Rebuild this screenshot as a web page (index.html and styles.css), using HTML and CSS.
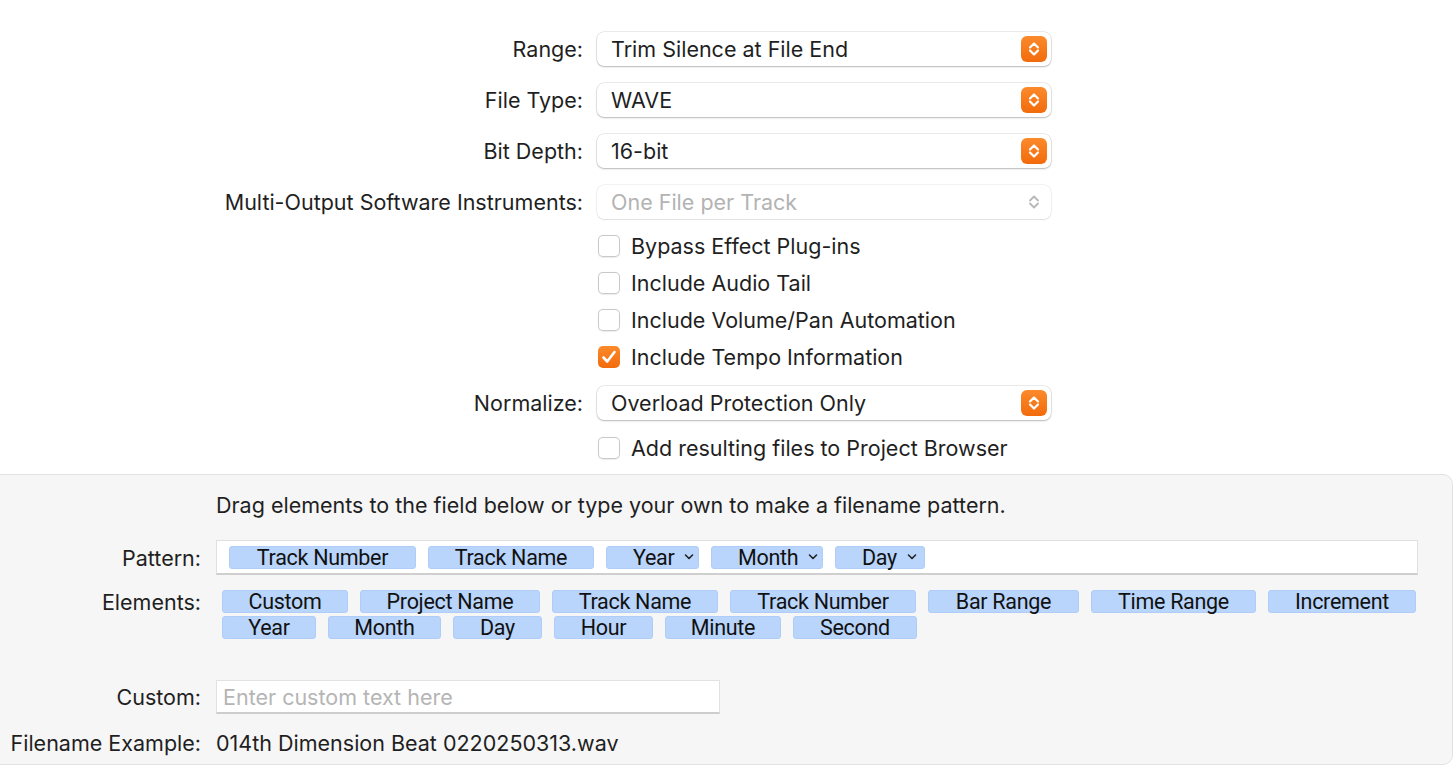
FILE: index.html
```html
<!DOCTYPE html>
<html>
<head>
<meta charset="utf-8">
<link rel="stylesheet" href="styles.css">
</head>
<body>
<div class="form">
  <div class="row popup-row">
    <div class="label">Range:</div>
    <div class="popup"><span>Trim Silence at File End</span><span class="stepper"><svg viewBox="0 0 24 24" width="24" height="24"><path d="M8 10.5 L12 6.5 L16 10.5 M8 13.5 L12 17.5 L16 13.5" fill="none" stroke="#fff" stroke-width="2.2" stroke-linecap="round" stroke-linejoin="round"/></svg></span></div>
  </div>
  <div class="row popup-row">
    <div class="label">File Type:</div>
    <div class="popup"><span>WAVE</span><span class="stepper"><svg viewBox="0 0 24 24" width="24" height="24"><path d="M8 10.5 L12 6.5 L16 10.5 M8 13.5 L12 17.5 L16 13.5" fill="none" stroke="#fff" stroke-width="2.2" stroke-linecap="round" stroke-linejoin="round"/></svg></span></div>
  </div>
  <div class="row popup-row">
    <div class="label">Bit Depth:</div>
    <div class="popup"><span>16-bit</span><span class="stepper"><svg viewBox="0 0 24 24" width="24" height="24"><path d="M8 10.5 L12 6.5 L16 10.5 M8 13.5 L12 17.5 L16 13.5" fill="none" stroke="#fff" stroke-width="2.2" stroke-linecap="round" stroke-linejoin="round"/></svg></span></div>
  </div>
  <div class="row popup-row tight">
    <div class="label">Multi-Output Software Instruments:</div>
    <div class="popup disabled"><span>One File per Track</span><span class="stepper plain"><svg viewBox="0 0 24 24" width="24" height="24"><path d="M8 10.5 L12 6.5 L16 10.5 M8 13.5 L12 17.5 L16 13.5" fill="none" stroke="#b8b8b8" stroke-width="1.8" stroke-linecap="round" stroke-linejoin="round"/></svg></span></div>
  </div>
  <div class="checks">
    <div class="check-row"><span class="box"></span><span>Bypass Effect Plug-ins</span></div>
    <div class="check-row"><span class="box"></span><span>Include Audio Tail</span></div>
    <div class="check-row"><span class="box"></span><span>Include Volume/Pan Automation</span></div>
    <div class="check-row"><span class="box checked"><svg viewBox="0 0 22 22" width="22" height="22"><path d="M5.5 11.5 L9.2 15.5 L16.5 6" fill="none" stroke="#fff" stroke-width="2.6" stroke-linecap="round" stroke-linejoin="round"/></svg></span><span>Include Tempo Information</span></div>
  </div>
  <div class="row popup-row normalize">
    <div class="label">Normalize:</div>
    <div class="popup"><span>Overload Protection Only</span><span class="stepper"><svg viewBox="0 0 24 24" width="24" height="24"><path d="M8 10.5 L12 6.5 L16 10.5 M8 13.5 L12 17.5 L16 13.5" fill="none" stroke="#fff" stroke-width="2.2" stroke-linecap="round" stroke-linejoin="round"/></svg></span></div>
  </div>
  <div class="checks last">
    <div class="check-row"><span class="box"></span><span>Add resulting files to Project Browser</span></div>
  </div>
</div>

<div class="panel">
  <div class="prow hint-row">
    <div class="plabel"></div>
    <div class="hint">Drag elements to the field below or type your own to make a filename pattern.</div>
  </div>
  <div class="prow pattern-row">
    <div class="plabel">Pattern:</div>
    <div class="pattern">
      <span class="tok w187">Track Number</span>
      <span class="tok w166">Track Name</span>
      <span class="tok menu w93">Year<svg viewBox="0 0 10 6" width="10" height="6"><path d="M1.5 1 L5 4.5 L8.5 1" fill="none" stroke="#222" stroke-width="1.6" stroke-linecap="round" stroke-linejoin="round"/></svg></span>
      <span class="tok menu w112">Month<svg viewBox="0 0 10 6" width="10" height="6"><path d="M1.5 1 L5 4.5 L8.5 1" fill="none" stroke="#222" stroke-width="1.6" stroke-linecap="round" stroke-linejoin="round"/></svg></span>
      <span class="tok menu w90">Day<svg viewBox="0 0 10 6" width="10" height="6"><path d="M1.5 1 L5 4.5 L8.5 1" fill="none" stroke="#222" stroke-width="1.6" stroke-linecap="round" stroke-linejoin="round"/></svg></span>
    </div>
  </div>
  <div class="prow elements-row">
    <div class="plabel">Elements:</div>
    <div class="elements">
      <span class="tok w126">Custom</span>
      <span class="tok w180">Project Name</span>
      <span class="tok w166">Track Name</span>
      <span class="tok w186">Track Number</span>
      <span class="tok w151">Bar Range</span>
      <span class="tok w165">Time Range</span>
      <span class="tok w148">Increment</span>
      <span class="tok w94">Year</span>
      <span class="tok w113">Month</span>
      <span class="tok w89">Day</span>
      <span class="tok w99">Hour</span>
      <span class="tok w116">Minute</span>
      <span class="tok w124">Second</span>
    </div>
  </div>
  <div class="prow custom-row">
    <div class="plabel">Custom:</div>
    <div class="field">Enter custom text here</div>
  </div>
  <div class="prow example-row">
    <div class="plabel">Filename Example:</div>
    <div class="example">014th Dimension Beat 0220250313.wav</div>
  </div>
</div>
</body>
</html>
```
FILE: styles.css
```css
* { box-sizing: border-box; }
html, body {
  margin: 0;
  padding: 0;
  background: #ffffff;
  overflow: hidden;
}
body {
  width: 1456px;
  height: 768px;
  font-family: Inter, "Noto Sans", sans-serif;
  font-size: 21.5px;
  color: #1f1f1f;
}

/* top form */
.form {
  padding-top: 32px;
}
.row {
  display: flex;
  align-items: center;
}
.label {
  width: 583px;
  text-align: right;
  margin-right: 14px;
  white-space: nowrap;
}
.popup-row { height: 34px; margin-bottom: 17px; }
.popup-row.tight { margin-bottom: 8px; }
.popup {
  width: 454px;
  height: 34px;
  display: flex;
  align-items: center;
  justify-content: space-between;
  padding: 0 4px 0 14px;
  background: #fff;
  border-radius: 7px;
  box-shadow: 0 0 0 0.5px rgba(0,0,0,0.14), 0 1px 2px rgba(0,0,0,0.22);
}
.popup.disabled {
  color: #b3b3b3;
  box-shadow: 0 0 0 0.5px rgba(0,0,0,0.10), 0 1px 1.5px rgba(0,0,0,0.08);
}
.stepper {
  width: 26px;
  height: 26px;
  border-radius: 6px;
  background: linear-gradient(#fb8a2b, #f26b0c);
  display: flex;
  align-items: center;
  justify-content: center;
}
.stepper.plain { background: none; }

.checks {
  margin-left: 597px;
}
.check-row {
  height: 37px;
  display: flex;
  align-items: center;
  gap: 11px;
}
.box {
  width: 22px;
  height: 22px;
  border-radius: 5px;
  background: #fff;
  box-shadow: inset 0 0 0 1px #c9c9c9, 0 0.5px 1px rgba(0,0,0,0.08);
  margin-left: 1px;
  display: flex;
  align-items: center;
  justify-content: center;
}
.box.checked {
  background: linear-gradient(#fb8a2b, #f26b0c);
  box-shadow: none;
}
.normalize { margin-top: 11px; margin-bottom: 9px; }

/* bottom panel */
.panel {
  margin-top: 8px;
  margin-left: -12px;
  width: 1465px;
  height: 291px;
  background: #f6f6f6;
  border: 1px solid #e2e2e2;
  border-radius: 0 10px 10px 0;
  padding-left: 12px;
  padding-top: 16px;
}
.prow {
  display: flex;
  align-items: center;
}
.plabel {
  width: 200px;
  margin-right: 15px;
  text-align: right;
  white-space: nowrap;
  flex: none;
}
.hint-row { height: 28px; margin-bottom: 21px; }
.pattern {
  width: 1202px;
  height: 35px;
  background: #fff;
  border: 1px solid #e0e0e0;
  border-bottom: 2px solid #cfcfcf;
  display: flex;
  align-items: center;
  gap: 12px;
  padding-left: 12px;
}
.tok {
  height: 23px;
  display: inline-flex;
  align-items: center;
  justify-content: center;
  background: #b9d5fb;
  border: 1px solid #aecdf8;
  border-radius: 3px;
  font-family: Roboto, Inter, sans-serif;
  font-size: 21.5px;
  letter-spacing: -0.3px;
  color: #111;
  flex: none;
}
.tok.menu { justify-content: flex-start; padding-left: 26px; gap: 10px; }
.tok.menu svg { flex: none; }
.w187 { width: 187px; } .w166 { width: 166px; } .w93 { width: 93px; }
.w112 { width: 112px; } .w90 { width: 90px; } .w126 { width: 126px; }
.w180 { width: 180px; } .w186 { width: 186px; } .w151 { width: 151px; }
.w165 { width: 165px; } .w148 { width: 148px; } .w94 { width: 94px; }
.w113 { width: 113px; } .w89 { width: 89px; } .w99 { width: 99px; }
.w116 { width: 116px; } .w124 { width: 124px; }

.elements-row { align-items: flex-start; margin-top: 15px; }
.elements-row .plabel { line-height: 24px; }
.elements {
  width: 1202px;
  padding-left: 6px;
  display: flex;
  flex-wrap: wrap;
  column-gap: 12px;
  row-gap: 3px;
}
.custom-row { margin-top: 41px; }
.field {
  width: 504px;
  height: 34px;
  background: #fff;
  border: 1px solid #e2e2e2;
  border-bottom: 2px solid #cdcdcd;
  color: #b5b5b5;
  padding-left: 6px;
  display: flex;
  align-items: center;
}
.example-row { margin-top: 13px; height: 32px; }
```
